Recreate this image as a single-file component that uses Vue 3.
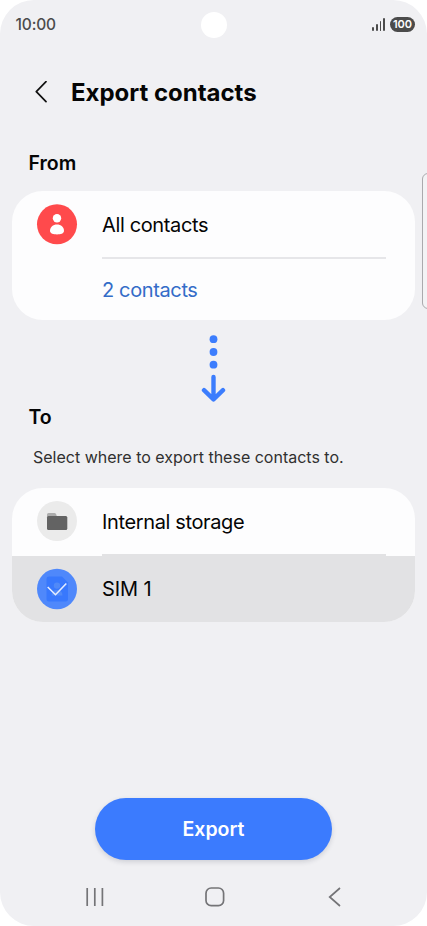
<script setup>
const signalBars = [4, 7, 10, 13]
</script>

<template>
  <main class="screen">
    <header class="status">
      <span class="clock">10:00</span>
      <div class="indicators">
        <div class="signal">
          <i v-for="h in signalBars" :key="h" class="bar" :style="{ height: h + 'px' }"></i>
        </div>
        <span class="battery">100</span>
      </div>
      <span class="camera"></span>
    </header>

    <div class="titlebar">
      <svg class="back" width="12" height="22" viewBox="0 0 12 22">
        <path d="M11 0.7 L1.3 10.7 L11 20.7" />
      </svg>
      <h1 class="title">Export contacts</h1>
    </div>

    <h2 class="heading from">From</h2>
    <section class="card source">
      <div class="row all">
        <svg class="avatar" width="40" height="40" viewBox="0 0 40 40">
          <circle cx="20" cy="20.3" r="20" fill="#ff4a4c" />
          <circle cx="20" cy="14.2" r="4.2" fill="#fff" />
          <path d="M13 27 C13 23 16 20.5 20 20.5 S27 23 27 27 C27 29.5 23.5 30.4 20 30.4 S13 29.5 13 27Z" fill="#fff" />
        </svg>
        <span>All contacts</span>
      </div>
      <div class="divider"></div>
      <div class="row count"><span>2 contacts</span></div>
    </section>

    <div class="transfer">
      <svg width="25" height="68" viewBox="0 0 25 68">
        <g fill="#3c7dfd">
          <circle cx="12.5" cy="4.2" r="3.9" />
          <circle cx="12.5" cy="17" r="3.9" />
          <circle cx="12.5" cy="29.7" r="3.9" />
        </g>
        <path d="M12.5 42 V64 M3 55.2 L12.5 64.4 L22 55.2" fill="none" stroke="#3c7dfd" stroke-width="4.4" stroke-linecap="round" stroke-linejoin="round" />
      </svg>
    </div>

    <h2 class="heading to">To</h2>
    <p class="hint"><span>Select where to export these contacts to.</span></p>
    <section class="card target">
      <div class="row storage">
        <svg class="avatar" width="40" height="40" viewBox="0 0 40 40">
          <circle cx="20" cy="20" r="20" fill="#ebebeb" />
          <path d="M10 18 V13.5 Q10 12 11.5 12 H17.5 Q19 12 19.3 13.5 L20 16 V18Z" fill="#acacac" />
          <rect x="10" y="15" width="20.3" height="14" rx="1.5" fill="#636363" />
        </svg>
        <span>Internal storage</span>
      </div>
      <div class="divider joined"></div>
      <div class="row selected">
        <svg class="avatar" width="40" height="41" viewBox="0 0 40 41">
          <ellipse cx="20" cy="20" rx="20" ry="20.3" fill="#4f88fb" />
          <path d="M12 7.6 H25 L31 13.6 V30 Q31 32.5 28.5 32.5 H12 Q9.5 32.5 9.5 30 V10 Q9.5 7.6 12 7.6Z" fill="#3878fd" />
          <circle cx="20" cy="16.6" r="3.2" fill="#5089f8" />
          <path d="M14.5 26.6 Q14.5 21 20 21 T25.5 26.6Z" fill="#5089f8" />
          <path d="M10.7 18 L18.5 25.7 L29.3 14.5" fill="none" stroke="#e4edff" stroke-width="1.6" />
        </svg>
        <span class="sim">SIM 1</span>
      </div>
    </section>

    <footer class="actions">
      <button class="export">Export</button>
    </footer>
    <nav class="nav">
      <svg width="18" height="20" viewBox="0 0 18 20">
        <path d="M1.2 1 V19 M8.8 1 V19 M16.4 1 V19" />
      </svg>
      <svg class="home" width="20" height="20" viewBox="0 0 20 20">
        <rect x="1" y="1" width="17.6" height="17.6" rx="5.2" />
      </svg>
      <svg width="13" height="20" viewBox="0 0 13 20">
        <path d="M12 1 L1.7 10 L12 19" />
      </svg>
    </nav>
    <div class="edge-handle"></div>
  </main>
</template>

<style>
body {
  margin: 0;
  background: #fff;
}
</style>

<style scoped>
.screen {
  position: relative;
  box-sizing: border-box;
  width: 427px;
  height: 926px;
  overflow: hidden;
  border-radius: 34px;
  background: #f0f0f3;
  color: #050505;
  font-family: Inter, "Liberation Sans", sans-serif;
  display: flex;
  flex-direction: column;
}
span {
  white-space: nowrap;
}
.status {
  height: 48px;
  flex: none;
  padding: 0 12px 0 15.5px;
  display: flex;
  align-items: center;
  justify-content: space-between;
}
.clock {
  font-size: 15.5px;
  font-weight: 500;
  letter-spacing: -0.15px;
  color: #4b4b4b;
}
.indicators {
  display: flex;
  align-items: center;
  gap: 5px;
}
.signal {
  display: flex;
  align-items: flex-end;
  gap: 2px;
  height: 13px;
}
.bar {
  width: 1.7px;
  border-radius: 1px;
  background: #4b4b4b;
}
.battery {
  width: 25px;
  height: 15px;
  border-radius: 8px;
  background: #4b4b4b;
  color: #fff;
  font-size: 11px;
  font-weight: 600;
  line-height: 15px;
  text-align: center;
}
.camera {
  position: absolute;
  left: 200.5px;
  top: 12px;
  width: 26px;
  height: 26px;
  border-radius: 50%;
  background: #fff;
}
.titlebar {
  height: 88px;
  flex: none;
  padding-left: 35px;
  display: flex;
  align-items: center;
  gap: 24px;
}
.back {
  fill: none;
  stroke: #111;
  stroke-width: 1.7;
  stroke-linecap: round;
  stroke-linejoin: round;
}
.title {
  margin: 0;
  font-size: 24px;
  font-weight: 700;
  letter-spacing: -0.02px;
}
.heading {
  flex: none;
  box-sizing: border-box;
  margin: 0;
  padding: 0 0 2px 28.5px;
  display: flex;
  align-items: center;
  font-size: 19.5px;
  font-weight: 600;
}
.from {
  height: 55px;
}
.to {
  height: 28px;
}
.card {
  flex: none;
  margin: 0 12px;
  border-radius: 31px;
  overflow: hidden;
  background: #fdfdfe;
  font-size: 20px;
  letter-spacing: -0.37px;
}
.source {
  height: 128.5px;
}
.target {
  height: 134px;
}
.row {
  height: 67px;
  padding-left: 25px;
  display: flex;
  align-items: center;
  gap: 25px;
}
.row.all {
  height: 66px;
}
.row.all span {
  padding-top: 2px;
}
.avatar {
  flex: none;
  overflow: visible;
}
.divider {
  height: 1.5px;
  margin: 0 29px 0 90px;
  background: #e6e6e9;
}
.row.count {
  height: 63px;
  padding-left: 90px;
  color: #346cc8;
}
.row.storage {
  height: 66px;
}
.row.storage span {
  padding-top: 1px;
}
.divider.joined {
  background: #e2e2e4;
}
.selected {
  background: #e2e2e4;
}
.sim {
  letter-spacing: -0.1px;
}
.transfer {
  height: 84px;
  flex: none;
  padding-top: 15px;
  box-sizing: border-box;
  display: flex;
  justify-content: center;
}
.hint {
  height: 56.5px;
  box-sizing: border-box;
  margin: 0;
  padding: 0 0 5px 33px;
  flex: none;
  display: flex;
  align-items: center;
  font-size: 16px;
  color: #303030;
}
.actions {
  margin-top: 176px;
  flex: none;
  display: flex;
  justify-content: center;
}
.export {
  width: 237px;
  height: 62px;
  border: 0;
  border-radius: 31px;
  background: #3b7bfe;
  color: #fff;
  font: 600 19.5px Inter, sans-serif;
  box-shadow: 0 2px 5px rgba(30, 40, 60, 0.16);
}
.nav {
  height: 74px;
  flex: none;
  padding: 0 86px;
  display: flex;
  align-items: center;
  justify-content: space-between;
}
.nav svg {
  fill: none;
  stroke: #747477;
  stroke-width: 1.7;
}
.nav .home {
  margin-right: 3px;
}
.edge-handle {
  position: absolute;
  right: -8px;
  top: 173px;
  width: 11px;
  height: 134px;
  border: 1px solid #aaaaad;
  border-radius: 6px;
  background: #f3f3f5;
}
</style>
